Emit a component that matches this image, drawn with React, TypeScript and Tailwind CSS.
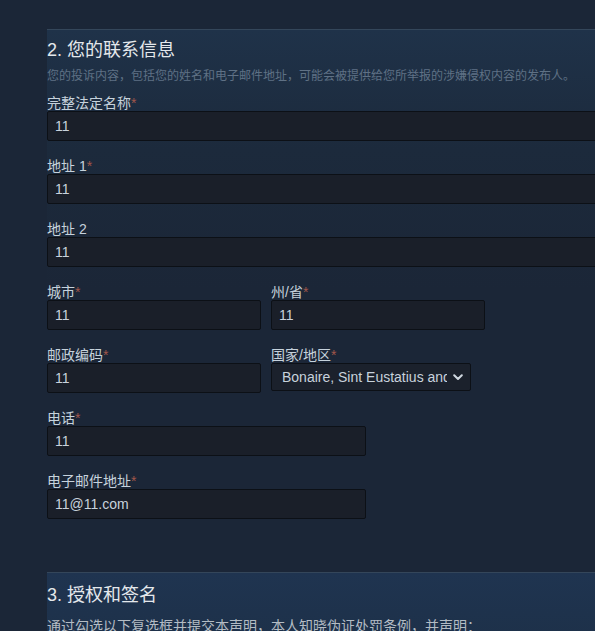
import React from 'react';

const font = { fontFamily: '"Liberation Sans", "Noto Sans CJK SC", sans-serif' };

function Label({ text, required }: { text: string; required?: boolean }) {
  return (
    <div className="text-[14px] leading-[16px] text-[#c6d2dc] whitespace-nowrap">
      {text}
      {required && <span className="text-[#a2564a]">*</span>}
    </div>
  );
}

function Field({
  label,
  value,
  required,
  width,
}: {
  label: string;
  value: string;
  required?: boolean;
  width: string;
}) {
  return (
    <div className="mb-[17px]">
      <Label text={label} required={required} />
      <div
        className={`${width} h-[30px] flex items-center pl-[7px] rounded-[2px] border border-[#0c1016] bg-[#1a1f29] text-[14px] text-[#c8d2dc]`}
      >
        {value}
      </div>
    </div>
  );
}

function App() {
  return (
    <div className="min-h-screen bg-[#1b2637] pt-[29px] pl-[47px] overflow-hidden" style={font}>
      {/* Section 2 */}
      <div className="w-[600px] border-t border-[#34465a] bg-[linear-gradient(to_bottom,#1f3249_0px,#1c2a3c_120px,#1b2637_260px)] pt-[8px]">
        <h2 className="text-[18px] leading-[24px] text-[#e4e8ec]">2. 您的联系信息</h2>
        <p className="mt-[6px] text-[12px] leading-[16px] text-[#5f7185] whitespace-nowrap">
          您的投诉内容，包括您的姓名和电子邮件地址，可能会被提供给您所举报的涉嫌侵权内容的发布人。
        </p>

        <div className="mt-[11px]">
          <Field label="完整法定名称" value="11" required width="w-[570px]" />
          <Field label="地址 1" value="11" required width="w-[570px]" />
          <Field label="地址 2" value="11" width="w-[570px]" />

          <div className="flex gap-[10px]">
            <Field label="城市" value="11" required width="w-[214px]" />
            <Field label="州/省" value="11" required width="w-[214px]" />
          </div>

          <div className="flex gap-[10px]">
            <Field label="邮政编码" value="11" required width="w-[214px]" />
            <div>
              <Label text="国家/地区" required />
              <div className="w-[200px] h-[28px] flex items-center justify-between pl-[10px] pr-[7px] rounded-[2px] border border-[#0c1016] bg-[#1b212c] text-[14px] text-[#c8d2dc]">
                <span className="w-[165px] overflow-hidden whitespace-nowrap">
                  Bonaire, Sint Eustatius and Saba
                </span>
                <svg width="10" height="7" viewBox="0 0 10 7" fill="none">
                  <path d="M1.2 1.2 L5 5 L8.8 1.2" stroke="#d0d8e0" strokeWidth="2" strokeLinecap="round" strokeLinejoin="round" />
                </svg>
              </div>
            </div>
          </div>

          <Field label="电话" value="11" required width="w-[319px]" />
          <Field label="电子邮件地址" value="11@11.com" required width="w-[319px]" />
        </div>
        <div className="h-[36px]" />
      </div>

      {/* Section 3 */}
      <div className="w-[600px] border-t border-[#34465a] bg-[linear-gradient(to_bottom,#1f3450_0px,#1d3048_80px,#1b2637_200px)] pt-[10px] pb-[40px]">
        <h2 className="text-[18px] leading-[24px] text-[#e4e8ec]">3. 授权和签名</h2>
        <p className="mt-[9px] text-[14px] leading-[20px] text-[#b4bcc4] whitespace-nowrap">
          通过勾选以下复选框并提交本声明，本人知晓伪证处罚条例，并声明：
        </p>
      </div>
    </div>
  );
}

export default App;
